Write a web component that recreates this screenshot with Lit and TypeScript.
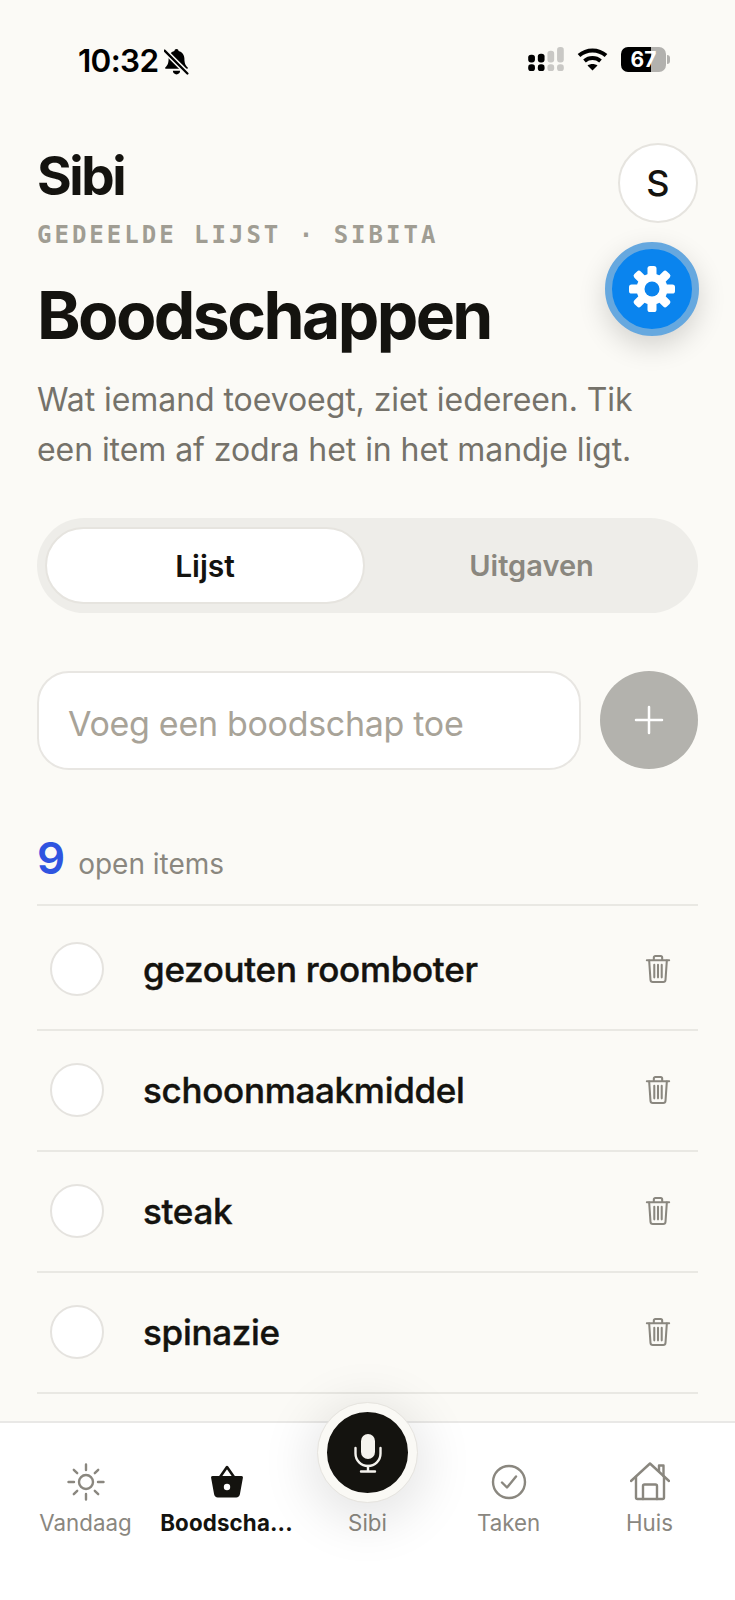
import { LitElement, html, css, svg } from "lit";
import { customElement } from "lit/decorators.js";

const items = ["gezouten roomboter", "schoonmaakmiddel", "steak", "spinazie"];

const trashIcon = html`<svg class="trash" viewBox="0 0 28 32" fill="none" stroke="currentColor" stroke-width="2.2" stroke-linecap="round" stroke-linejoin="round">
  <path d="M2 6.5h24" />
  <path d="M9.5 6V3.6C9.5 2.7 10.2 2 11.1 2h5.8c.9 0 1.6.7 1.6 1.6V6" />
  <path d="M4.5 7l1.4 20.6c.1 1.4 1.2 2.4 2.5 2.4h11.2c1.3 0 2.4-1 2.5-2.4L23.5 7" />
  <path d="M10 11.5v13.5M14 11.5v13.5M18 11.5v13.5" />
</svg>`;

const gearTeeth = [0, 45, 90, 135, 180, 225, 270, 315].map(
  (deg) => svg`<rect x="19.5" y="1" width="9" height="12" rx="2.6" fill="#fff" transform="rotate(${deg} 24 24)" />`
);

@customElement("app-root")
export class AppRoot extends LitElement {
  static styles = css`
    :host {
      display: block;
      font-family: Inter, "Noto Sans", sans-serif;
      color: #14130f;
    }
    .screen {
      position: relative;
      width: 735px;
      height: 1600px;
      background: #fbfaf6;
      overflow: hidden;
      display: flex;
      flex-direction: column;
    }
    .status {
      height: 143px;
      flex: none;
      box-sizing: border-box;
      padding: 43px 69px 0 78px;
      display: flex;
      justify-content: space-between;
      align-items: flex-start;
    }
    .status-left {
      display: flex;
      align-items: center;
      gap: 6px;
      font-size: 31.5px;
      line-height: 36px;
      font-weight: 600;
      letter-spacing: -0.7px;
      color: #000;
    }
    .status-right {
      display: flex;
      align-items: center;
      gap: 13px;
      height: 36px;
      margin-top: -2px;
    }
    .battery {
      width: 45px;
      height: 25px;
      border-radius: 7px;
      background: linear-gradient(90deg, #000 0 67%, #b2b1ae 67% 100%);
      color: #fff;
      font-size: 21px;
      line-height: 25px;
      font-weight: 700;
      text-align: center;
      position: relative;
    }
    .battery::after {
      content: "";
      position: absolute;
      right: -4px;
      top: 8px;
      width: 3px;
      height: 9px;
      border-radius: 0 3px 3px 0;
      background: #b2b1ae;
    }
    main {
      flex: 1;
      min-height: 0;
      padding: 0 37px;
      overflow: hidden;
    }
    .top {
      display: flex;
      justify-content: space-between;
      align-items: flex-start;
    }
    .brand {
      font-size: 53px;
      line-height: 66px;
      font-weight: 700;
      letter-spacing: -2.4px;
    }
    .avatar {
      width: 80px;
      height: 80px;
      box-sizing: border-box;
      border: 2px solid #e6e4df;
      border-radius: 50%;
      background: #fff;
      display: flex;
      align-items: center;
      justify-content: center;
      font-size: 36px;
      font-weight: 500;
    }
    .eyebrow {
      font-family: "DejaVu Sans Mono", monospace;
      font-size: 24px;
      line-height: 30px;
      font-weight: 700;
      letter-spacing: 3px;
      color: #a09d93;
      margin-top: -3px;
    }
    h1 {
      margin: 26px 0 0;
      font-size: 66px;
      line-height: 78px;
      font-weight: 700;
      letter-spacing: -2.6px;
    }
    .lead {
      margin: 21px 0 0;
      font-size: 32px;
      line-height: 50px;
      color: #75726a;
      letter-spacing: -0.07px;
    }
    .tabs {
      margin-top: 43px;
      height: 95px;
      box-sizing: border-box;
      padding: 9px 0 9px 8px;
      border-radius: 48px;
      background: #eeede9;
      display: grid;
      grid-template-columns: 320px 1fr;
    }
    .tab {
      display: flex;
      align-items: center;
      justify-content: center;
      font-size: 29px;
      font-weight: 600;
      color: #8a877f;
      border-radius: 40px;
    }
    .tab.active {
      background: #fff;
      color: #14130f;
      border: 2px solid #e6e4df;
      box-sizing: border-box;
      font-size: 30px;
    }
    .add {
      margin-top: 58px;
      display: flex;
      gap: 19px;
    }
    .field {
      flex: 1;
      height: 99px;
      box-sizing: border-box;
      border: 2px solid #e8e6e2;
      border-radius: 32px;
      background: #fff;
      padding: 6px 0 0 29px;
      display: flex;
      align-items: center;
      font-size: 34px;
      letter-spacing: -0.3px;
      color: #a8a398;
    }
    .plus {
      width: 98px;
      height: 98px;
      border-radius: 50%;
      background: #b3b2ad;
      display: flex;
      align-items: center;
      justify-content: center;
    }
    .count {
      margin-top: 66px;
      height: 70px;
      box-sizing: border-box;
      border-bottom: 2px solid #e9e8e3;
      display: flex;
      align-items: baseline;
      gap: 13px;
    }
    .count b {
      font-size: 44px;
      line-height: 44px;
      font-weight: 600;
      color: #2f54e0;
    }
    .count span {
      font-size: 28px;
      color: #8a877f;
    }
    .row {
      height: 121px;
      box-sizing: border-box;
      border-bottom: 2px solid #e9e8e3;
      display: flex;
      align-items: center;
      padding: 0 27px 2px 13px;
    }
    .row:first-child {
      height: 125px;
      padding-top: 4px;
    }
    .check {
      width: 54px;
      height: 54px;
      box-sizing: border-box;
      border: 2.5px solid #e5e3df;
      border-radius: 50%;
      background: #fff;
      flex: none;
    }
    .name {
      flex: 1;
      margin-left: 39px;
      font-size: 35px;
      font-weight: 500;
      letter-spacing: -0.3px;
      -webkit-text-stroke: 0.4px currentColor;
    }
    .trash {
      width: 26px;
      height: 30px;
      color: #8a877f;
      flex: none;
    }
    nav {
      flex: none;
      height: 179px;
      box-sizing: border-box;
      background: #fff;
      border-top: 2px solid #e9e8e6;
      padding: 0 15px;
      display: grid;
      grid-template-columns: repeat(5, 1fr);
    }
    .tabitem {
      display: flex;
      flex-direction: column;
      align-items: center;
      padding-top: 39px;
      color: #8a877f;
      font-size: 22.3px;
      line-height: 28px;
      min-width: 0;
    }
    .tabitem svg {
      width: 40px;
      height: 40px;
      flex: none;
    }
    .tabitem .slot {
      height: 40px;
      flex: none;
    }
    .tabitem .label {
      margin-top: 7px;
      white-space: nowrap;
    }
    .tabitem.active {
      color: #14130f;
    }
    .tabitem.active .label {
      font-weight: 700;
      letter-spacing: 0.15px;
    }
    .fab {
      position: absolute;
      left: 605px;
      top: 242px;
      width: 94px;
      height: 94px;
      border-radius: 50%;
      background: #0a84ee;
      box-sizing: border-box;
      border: 7.5px solid #66a8df;
      box-shadow: 0 10px 28px rgba(0, 0, 0, 0.16);
      display: flex;
      align-items: center;
      justify-content: center;
    }
    .fab svg {
      width: 48px;
      height: 48px;
    }
    .mic {
      position: absolute;
      left: 318px;
      top: 1403px;
      width: 99px;
      height: 99px;
      box-sizing: border-box;
      border-radius: 50%;
      background: #14130f;
      border: 9px solid #faf9f5;
      outline: 1px solid #e6e4df;
      box-shadow: 0 10px 50px 10px rgba(0, 0, 0, 0.1);
      display: flex;
      align-items: center;
      justify-content: center;
    }
    .mic svg {
      width: 40px;
      height: 40px;
    }
  `;

  render() {
    return html`<div class="screen">
      <div class="status">
        <div class="status-left">
          10:32
          <svg width="25" height="27" viewBox="2 1 24 26" fill="#000">
            <path d="M14 2c1.2 0 2 .8 2 1.8 3.6.9 5.6 3.9 5.6 7.4 0 4.600 1 6.600 3.200 8.600.5.5.2 1.200-.5 1.200H3.700c-.7 0-1-.7-.5-1.200 2.200-2 3.200-4 3.200-8.600 0-3.500 2-6.500 5.600-7.400 0-1 .8-1.800 2-1.800z" />
            <path d="M10.500 23h7c0 2-1.500 3.500-3.500 3.500s-3.500-1.500-3.500-3.500z" />
            <path d="M2.500 3.500l22 22" stroke="#fbfaf6" stroke-width="5" />
            <path d="M2.500 3.500l22 22" stroke="#000" stroke-width="2.200" stroke-linecap="round" />
          </svg>
        </div>
        <div class="status-right">
          <svg width="36" height="25" viewBox="0 0 37 26">
            <rect x="0" y="8" width="7" height="8" rx="3" fill="#000" />
            <rect x="0" y="18" width="7" height="7" rx="3" fill="#000" />
            <rect x="10" y="7" width="7" height="9" rx="3" fill="#000" />
            <rect x="10" y="18" width="7" height="7" rx="3" fill="#000" />
            <rect x="20" y="4" width="7" height="12" rx="3" fill="#c9c8c5" />
            <rect x="20" y="18" width="7" height="7" rx="3" fill="#c9c8c5" />
            <rect x="30" y="0" width="7" height="16" rx="3" fill="#c9c8c5" />
            <rect x="30" y="18" width="7" height="7" rx="3" fill="#c9c8c5" />
          </svg>
          <svg width="31" height="24" viewBox="0 0 31 24" fill="none" stroke="#000" stroke-width="4">
            <path d="M2 8.500c7.700-6.800 19.300-6.800 27 0" />
            <path d="M7.500 14c4.600-3.900 11.400-3.900 16 0" />
            <path d="M15.500 23.500l-5-5c3-2 7-2 10 0z" fill="#000" stroke="none" />
          </svg>
          <div class="battery">67</div>
        </div>
      </div>
      <main>
        <div class="top">
          <div class="brand">Sibi</div>
          <div class="avatar">S</div>
        </div>
        <div class="eyebrow">GEDEELDE LIJST · SIBITA</div>
        <h1>Boodschappen</h1>
        <p class="lead">Wat iemand toevoegt, ziet iedereen. Tik<br />een item af zodra het in het mandje ligt.</p>
        <div class="tabs">
          <div class="tab active">Lijst</div>
          <div class="tab">Uitgaven</div>
        </div>
        <div class="add">
          <div class="field">Voeg een boodschap toe</div>
          <div class="plus">
            <svg width="32" height="32" viewBox="0 0 32 32" stroke="#fff" stroke-width="2.500" stroke-linecap="round">
              <path d="M16 3v26M3 16h26" />
            </svg>
          </div>
        </div>
        <div class="count"><b>9</b><span>open items</span></div>
        <div class="rows">
          ${items.map(
            (item) => html`<div class="row">
              <div class="check"></div>
              <div class="name">${item}</div>
              ${trashIcon}
            </div>`
          )}
        </div>
      </main>
      <nav>
        <div class="tabitem">
          <svg viewBox="0 0 40 40" fill="none" stroke="currentColor" stroke-width="2.400" stroke-linecap="round">
            <circle cx="20" cy="20" r="7" />
            <path d="M20 2.500v5.500M20 32v5.500M2.500 20h5.500M32 20h5.500M7.800 7.800l3.400 3.400M28.800 28.800l3.400 3.400M7.800 32.200l3.400-3.400M28.800 11.200l3.400-3.400" />
          </svg>
          <div class="label">Vandaag</div>
        </div>
        <div class="tabitem active">
          <svg viewBox="0 0 40 40">
            <path d="M12 16.500L20 5l8 11.500" fill="none" stroke="currentColor" stroke-width="2.600" stroke-linejoin="round" />
            <path fill="currentColor" d="M5.500 14h29c1 0 1.600.8 1.400 1.800l-3 16.400c-.3 1.800-1.700 3.300-3.700 3.300H10.800c-2 0-3.400-1.500-3.700-3.300l-3-16.400C3.900 14.800 4.500 14 5.500 14z" />
            <circle cx="20" cy="25" r="3.200" fill="#fff" />
          </svg>
          <div class="label">Boodscha...</div>
        </div>
        <div class="tabitem">
          <div class="slot"></div>
          <div class="label">Sibi</div>
        </div>
        <div class="tabitem">
          <svg viewBox="0 0 40 40" fill="none" stroke="currentColor" stroke-width="2.400" stroke-linecap="round" stroke-linejoin="round">
            <circle cx="20" cy="20" r="16" />
            <path d="M13 20.500l5 5 9-11" />
          </svg>
          <div class="label">Taken</div>
        </div>
        <div class="tabitem">
          <svg viewBox="0 0 40 40" fill="none" stroke="currentColor" stroke-width="2.400" stroke-linecap="round" stroke-linejoin="round">
            <path d="M1 19L20 1.500 39 19" />
            <path d="M29 9V3.500h4.500V14" />
            <path d="M6 15v20.500c0 1 .6 1.500 1.500 1.500h25c.9 0 1.500-.5 1.500-1.500V15" />
            <path d="M13 37V24c0-.9.600-1.500 1.500-1.500h11c.9 0 1.500.6 1.500 1.500V37" />
          </svg>
          <div class="label">Huis</div>
        </div>
      </nav>
      <div class="fab">
        <svg viewBox="0 0 48 48">
          ${gearTeeth}
          <circle cx="24" cy="24" r="15.500" fill="#fff" />
          <circle cx="24" cy="24" r="7.500" fill="#0a84ee" />
        </svg>
      </div>
      <div class="mic">
        <svg viewBox="0 0 40 40" fill="none" stroke="#f5f3ee" stroke-width="2.400" stroke-linecap="round">
          <rect x="13" y="1" width="14" height="25" rx="7" fill="#f5f3ee" stroke="none" />
          <path d="M7.500 15v5.500C7.500 27.400 13 33 20 33s12.500-5.600 12.500-12.500V15" />
          <path d="M20 33v5M13 38.500h14" />
        </svg>
      </div>
    </div>`;
  }
}
